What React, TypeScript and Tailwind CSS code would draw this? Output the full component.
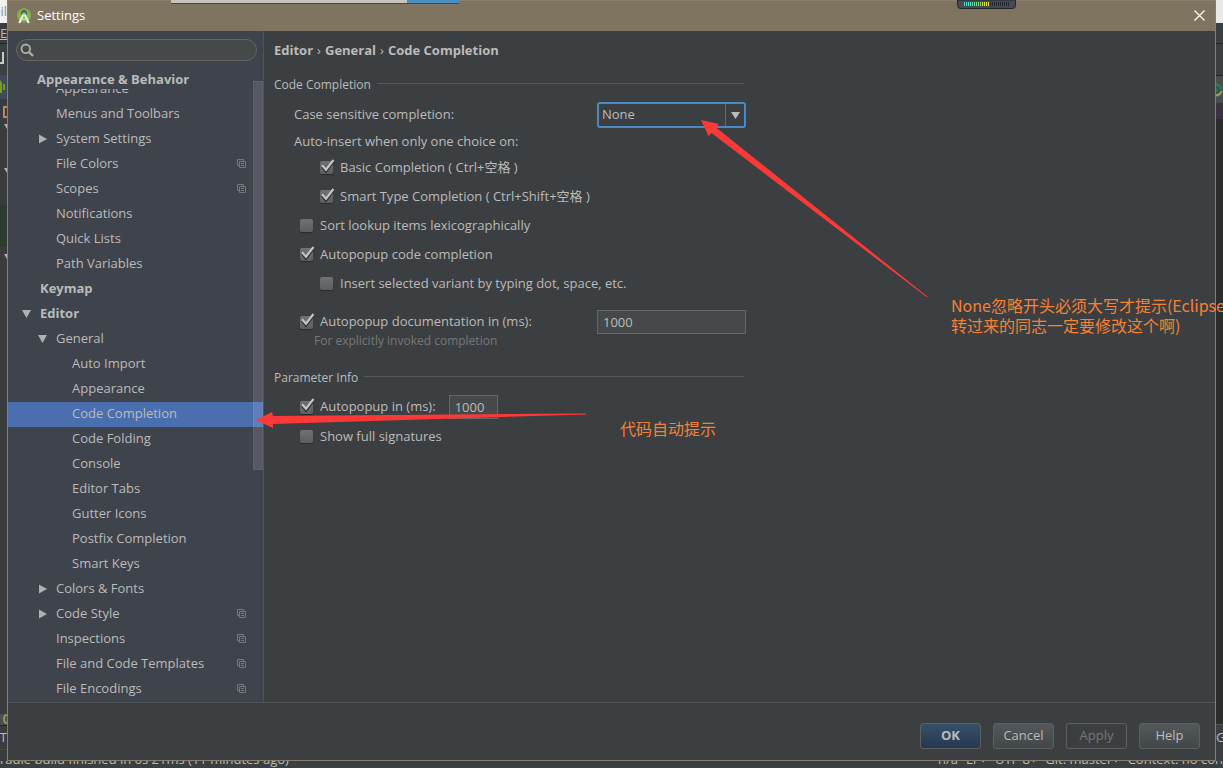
import { useState } from 'react';

type TreeItem = {
  label: string;
  level: 0 | 1 | 2;
  arrow?: 'open' | 'closed';
  project?: boolean;
};

const TREE: TreeItem[] = [
  { label: 'Appearance', level: 1 },
  { label: 'Menus and Toolbars', level: 1 },
  { label: 'System Settings', level: 1, arrow: 'closed' },
  { label: 'File Colors', level: 1, project: true },
  { label: 'Scopes', level: 1, project: true },
  { label: 'Notifications', level: 1 },
  { label: 'Quick Lists', level: 1 },
  { label: 'Path Variables', level: 1 },
  { label: 'Keymap', level: 0 },
  { label: 'Editor', level: 0, arrow: 'open' },
  { label: 'General', level: 1, arrow: 'open' },
  { label: 'Auto Import', level: 2 },
  { label: 'Appearance', level: 2 },
  { label: 'Code Completion', level: 2 },
  { label: 'Code Folding', level: 2 },
  { label: 'Console', level: 2 },
  { label: 'Editor Tabs', level: 2 },
  { label: 'Gutter Icons', level: 2 },
  { label: 'Postfix Completion', level: 2 },
  { label: 'Smart Keys', level: 2 },
  { label: 'Colors & Fonts', level: 1, arrow: 'closed' },
  { label: 'Code Style', level: 1, arrow: 'closed', project: true },
  { label: 'Inspections', level: 1, project: true },
  { label: 'File and Code Templates', level: 1, project: true },
  { label: 'File Encodings', level: 1, project: true },
];

const LEVEL_PAD = ['pl-3', 'pl-7', 'pl-11'];

function StudioLogo() {
  return (
    <svg className="h-4 w-4" viewBox="0 0 16 16" aria-hidden="true">
      <circle cx="8" cy="7.2" r="7" fill="#7bb54a" />
      <path d="M5 5a3 3 0 0 1 6 0v1.5H5z" fill="#4d6b55" />
      <path d="M7.2 7 3.2 15M8.8 7l4 8" fill="none" stroke="#f0f3ee" strokeWidth="2" />
      <path d="M4 10q4 2.600 8 0" fill="none" stroke="#d3dccb" strokeWidth="1.2" />
      <circle cx="8" cy="6.2" r="1.5" fill="#f0f3ee" />
      <circle cx="8" cy="6.2" r="0.7" fill="#4d6b55" />
    </svg>
  );
}

function TreeArrow({ state }: { state?: 'open' | 'closed' }) {
  return (
    <svg className="mr-1 h-3 w-4 shrink-0" viewBox="0 0 16 12" aria-hidden="true">
      {state === 'open' && <path d="M2 2h9l-4.5 8z" fill="#b0b0b0" />}
      {state === 'closed' && <path d="M3 1.5v9l8-4.5z" fill="#b0b0b0" />}
    </svg>
  );
}

function ProjectIcon() {
  return (
    <svg className="h-[10px] w-[10px] shrink-0" viewBox="0 0 10 10" fill="none" stroke="#75787d" aria-hidden="true">
      <path d="M2.5 6.5h-2v-6h6v2" />
      <path d="M2.5 2.5h6v6h-6zM4 4.5h3M4 6.5h3" />
    </svg>
  );
}

function CheckBox({ id, label, checked = false }: { id: string; label: string; checked?: boolean }) {
  return (
    <div className="flex items-center">
      <span className="relative mr-[7px] flex h-4 w-[13px] items-center">
        <input
          id={id}
          type="checkbox"
          defaultChecked={checked}
          className="peer h-[13px] w-[13px] appearance-none rounded-[2px] bg-linear-to-b from-[#707172] to-[#5d5e5f] shadow-[0_1px_1px_#28292a]"
        />
        <svg
          className="pointer-events-none absolute -top-px left-0 hidden h-[15px] w-[15px] peer-checked:block"
          viewBox="0 0 15 15"
          fill="none"
          aria-hidden="true"
        >
          <path d="M2 7.5l4 5L13.5 2.5" stroke="#2b2c2d" strokeWidth="2.4" />
          <path d="M2 6.2l4 4.5L13.5 1" stroke="#c4c4c4" strokeWidth="2.2" />
        </svg>
      </span>
      <label htmlFor={id}>{label}</label>
    </div>
  );
}

function SectionTitle({ children }: { children: string }) {
  return (
    <div className="flex h-5 items-center gap-[6px] pr-0.5 text-xs">
      <h2>{children}</h2>
      <div className="mb-[3px] h-px flex-1 bg-[#555759]" />
    </div>
  );
}

function Sidebar() {
  const [selected, setSelected] = useState(13);

  return (
    <aside className="relative flex w-64 shrink-0 flex-col overflow-hidden border-r border-[#515456] bg-[#3f434c]">
      <div className="relative mx-2 mt-2 mr-[6px]">
        <input
          type="text"
          aria-label="Search settings"
          className="block h-[22px] w-full rounded-full border border-[#646667] bg-[#45494a] pr-3 pl-6 outline-none"
        />
        <svg className="pointer-events-none absolute top-1 left-1 h-[14px] w-[14px]" viewBox="0 0 14 14" fill="none" stroke="#adadad" aria-hidden="true">
          <circle cx="5.8" cy="5.8" r="4.3" strokeWidth="1.8" />
          <path d="M9 9l4 4" strokeWidth="2.4" />
        </svg>
      </div>
      <h2 className="mt-[9px] h-[19px] pl-[29px] leading-[19px] font-bold">Appearance &amp; Behavior</h2>
      <nav className="min-h-0 flex-1 overflow-hidden">
        <ul className="-mt-3">
          {TREE.map((item, i) => (
            <li key={i}>
              <button
                type="button"
                onClick={() => setSelected(i)}
                className={`flex h-[25px] w-full items-center pr-4 pb-0.5 text-left ${LEVEL_PAD[item.level]} ${
                  item.level === 0 ? 'font-bold' : ''
                } ${selected === i ? 'bg-[#4b6eaf]' : ''}`}
              >
                <TreeArrow state={item.arrow} />
                <span className="flex-1">{item.label}</span>
                {item.project && <ProjectIcon />}
              </button>
            </li>
          ))}
        </ul>
      </nav>
      <div className="pointer-events-none absolute top-[50px] right-0 h-[389px] w-[10px] border border-white/5 bg-white/12" />
    </aside>
  );
}

function CompletionForm() {
  return (
    <section className="min-w-0 flex-1 pt-[10px] pl-[10px]">
      <h1 className="flex h-5 items-center gap-1 font-bold">
        <span>Editor</span>
        <span className="font-normal">›</span>
        <span>General</span>
        <span className="font-normal">›</span>
        <span>Code Completion</span>
      </h1>

      <div className="mt-[14px] w-[472px] max-w-full">
        <SectionTitle>Code Completion</SectionTitle>
        <div className="mt-[7px] flex h-[26px] items-center justify-between pl-5">
          <label htmlFor="case">Case sensitive completion:</label>
          <div className="relative h-[26px] w-[149px]">
            <select
              id="case"
              defaultValue="None"
              className="h-full w-full appearance-none rounded-[3px] border-2 border-[#4a88c7] bg-[#3c3f41] pl-[3px] outline-none"
            >
              <option>None</option>
              <option>First letter</option>
              <option>All</option>
            </select>
            <span className="pointer-events-none absolute inset-y-[2px] right-[2px] flex w-[19px] items-center justify-center border-l border-[#646667]">
              <svg className="h-[7px] w-[9px]" viewBox="0 0 9 7" aria-hidden="true">
                <path d="M0 0h9L4.5 7z" fill="#bbbbbb" />
              </svg>
            </span>
          </div>
        </div>
        <p className="h-[25px] pl-5 leading-[26px]">Auto-insert when only one choice on:</p>
        <div className="grid auto-rows-[29px] items-center pl-[26px]">
          <div className="pl-5">
            <CheckBox id="basic" label="Basic Completion ( Ctrl+空格 )" checked />
          </div>
          <div className="pl-5">
            <CheckBox id="smart" label="Smart Type Completion ( Ctrl+Shift+空格 )" checked />
          </div>
          <CheckBox id="sort" label="Sort lookup items lexicographically" />
          <CheckBox id="autopopup" label="Autopopup code completion" checked />
          <div className="pl-5">
            <CheckBox id="insert" label="Insert selected variant by typing dot, space, etc." />
          </div>
        </div>
        <div className="mt-[11px] flex h-[26px] items-center justify-between pl-[26px]">
          <CheckBox id="docs" label="Autopopup documentation in (ms):" checked />
          <input
            type="text"
            aria-label="Documentation delay"
            defaultValue="1000"
            className="h-6 w-[149px] border border-[#646667] bg-[#45494a] px-[5px] outline-none"
          />
        </div>
        <p className="h-3 pl-10 text-xs leading-3 text-[#777777]">For explicitly invoked completion</p>

        <div className="mt-[21px]">
          <SectionTitle>Parameter Info</SectionTitle>
        </div>
        <div className="mt-[6px] flex h-[26px] items-center gap-[13px] pl-[26px]">
          <CheckBox id="params" label="Autopopup in (ms):" checked />
          <input
            type="text"
            aria-label="Parameter info delay"
            defaultValue="1000"
            className="h-6 w-[49px] border border-[#646667] bg-[#45494a] px-[5px] outline-none"
          />
        </div>
        <div className="mt-0.5 flex h-[29px] items-center pl-[26px]">
          <CheckBox id="signatures" label="Show full signatures" />
        </div>
      </div>
    </section>
  );
}

function DialogButtons() {
  const base = 'h-[26px] w-[61px] rounded-[3px] border';
  const plain = 'border-[#5e6060] bg-linear-to-b from-[#53585a] to-[#434749]';

  return (
    <footer className="flex h-[58px] shrink-0 justify-end gap-3 border-t border-[#515456] pt-5 pr-[15px]">
      <button type="button" className={`${base} border-[#5e6060] bg-linear-to-b from-[#375069] to-[#263850] font-bold`}>
        OK
      </button>
      <button type="button" className={`${base} ${plain}`}>Cancel</button>
      <button type="button" disabled className={`${base} border-[#5e6060] text-[#777777]`}>
        Apply
      </button>
      <button type="button" className={`${base} ${plain}`}>Help</button>
    </footer>
  );
}

// Slivers of the IDE window that stay visible around the dialog
function LeftSliver() {
  return (
    <div className="flex w-[7px] shrink-0 flex-col overflow-hidden bg-[#393b3d] whitespace-nowrap">
      <div className="flex h-[23px] justify-end bg-[#f0f0f0] leading-[23px] text-[#8b8fa8]">eil</div>
      <div className="h-[21px] border-b border-[#242526] leading-5 underline">Ed</div>
      <div className="h-[31px] bg-[#3c3f41] pt-2">
        <div className="h-3 w-1 border-r-2 border-b-2 border-[#c8c8c8]" />
      </div>
      <div className="flex h-6 items-center bg-[#414a5c]">
        <svg className="h-[14px] w-[7px]" viewBox="0 0 7 14" aria-hidden="true">
          <path d="M0 0l2 3v10H0zM3 4h2v6H3z" fill="#79a01c" />
        </svg>
      </div>
      <div className="flex h-[25px] items-center justify-end">
        <div className="h-3 w-1 border-2 border-r-0 border-[#b08a58]" />
      </div>
      <div className="flex h-[81px] flex-col items-end justify-between pb-8">
        <svg className="h-[5px] w-[3px]" viewBox="0 0 3 5" aria-hidden="true">
          <path d="M0 0h3v5z" fill="#b0b0b0" />
        </svg>
        <svg className="h-[5px] w-[3px]" viewBox="0 0 3 5" aria-hidden="true">
          <path d="M0 0h3v5z" fill="#b0b0b0" />
        </svg>
      </div>
      <div className="h-[42px] bg-[#2f3a30]" />
      <div className="flex flex-1 justify-end pt-[7px]">
        <svg className="h-[5px] w-[3px]" viewBox="0 0 3 5" aria-hidden="true">
          <path d="M0 0h3v5z" fill="#b0b0b0" />
        </svg>
      </div>
      <div className="flex h-[11px] justify-end bg-[#4b4d4f]">
        <div className="h-[10px] w-1 rounded-l-full border-2 border-r-0 border-[#7d9a56]" />
      </div>
      <div className="flex h-6 items-center justify-end border-t border-[#242526]">: T</div>
      <div className="h-3 border-t border-[#48494b]" />
    </div>
  );
}

function RightSliver() {
  return (
    <div className="flex w-[7px] shrink-0 flex-col overflow-hidden bg-[#2d2c2c]">
      <div className="h-[23px] bg-[#e9e9e9]" />
      <div className="h-[21px] border-b border-[#242526] bg-[#3c3f41]" />
      <div className="h-8 border-b border-[#242526] bg-[#3c3f41]" />
      <div className="flex h-[27px] items-center bg-[#4a4d4f]">
        <svg className="h-[14px] w-[7px]" viewBox="0 0 7 14" fill="none" strokeWidth="2" aria-hidden="true">
          <path d="M0 1.5q4 0 5 4.5" stroke="#218455" />
          <path d="M5.5 8q-1 4-5.5 4.5" stroke="#86a95a" />
          <circle cx="0" cy="7" r="1.5" fill="#218455" />
        </svg>
      </div>
      <div className="h-4 bg-[#3a333f]" />
      <div className="flex-1" />
      <div className="h-[37px] border-t border-[#515456] bg-[#3c3f41] leading-6">G</div>
    </div>
  );
}

function MeterWidget() {
  return (
    <svg className="absolute top-0 left-[957px] h-[9px] w-[59px]" viewBox="0 0 59 9" aria-hidden="true">
      <path d="M.5 0v5.5q0 3 3 3h52q3 0 3-3V0z" fill="#454a56" stroke="#24262c" />
      {Array.from({ length: 23 }, (_, i) => (
        <rect key={i} x={7 + i * 2} y="2" width="1" height="4" fill={i < 5 ? '#4fdcc4' : i < 9 ? '#7fe07c' : i < 13 ? '#e6de4a' : '#262931'} />
      ))}
    </svg>
  );
}

function Annotations() {
  return (
    <div className="pointer-events-none absolute inset-0 overflow-hidden font-['Noto_Sans_CJK_SC',sans-serif] text-base leading-5 text-[#f58137]">
      <svg className="absolute top-0 left-0 h-[768px] w-[1223px]" viewBox="0 0 1223 768" fill="#fb3a38" aria-hidden="true">
        <path d="M701 120l18 4-3 3.5L928 297h-1.5L711.5 133l-3 3z" />
        <path d="M256 420l16-8 1 4 313-2.5v1L273 424v4z" />
      </svg>
      <p className="absolute top-[295px] left-[951px] whitespace-nowrap">
        None忽略开头必须大写才提示(Eclipse
        <br />
        转过来的同志一定要修改这个啊)
      </p>
      <p className="absolute top-[418px] left-[620px] whitespace-nowrap">代码自动提示</p>
    </div>
  );
}

export default function App() {
  return (
    <div className="relative flex h-screen flex-col overflow-hidden bg-[#3c3f41] font-['Open_Sans','Noto_Sans_CJK_SC',sans-serif] text-[13px] text-[#bbbbbb]">
      <div className="flex min-h-0 flex-1">
        <LeftSliver />
        <main className="flex min-w-0 flex-1 flex-col border border-t-0 border-[#8a8069] bg-[#3c3f41]">
          <header className="flex h-[31px] shrink-0 items-center border-t border-[#8a8069] bg-[#7f7460] px-2 pb-px text-white">
            <StudioLogo />
            <span className="ml-[5px] flex-1">Settings</span>
            <button type="button" aria-label="Close" className="p-0.5">
              <svg className="h-[11px] w-[11px]" viewBox="0 0 11 11" stroke="#ffffff" strokeWidth="1.2" aria-hidden="true">
                <path d="M.5.5l10 10M10.5.5l-10 10" />
              </svg>
            </button>
          </header>
          <div className="flex min-h-0 flex-1">
            <Sidebar />
            <CompletionForm />
          </div>
          <DialogButtons />
        </main>
        <RightSliver />
      </div>
      <div className="flex h-[7px] shrink-0 items-end justify-between overflow-hidden bg-[#3c3f41] leading-[18px] whitespace-nowrap">
        <span>radle build finished in 6s 21ms (11 minutes ago)</span>
        <span className="flex gap-2">
          <span>n/a</span>
          <span>LF÷</span>
          <span>UTF-8÷</span>
          <span>Git: master÷</span>
          <span>Context: no con</span>
        </span>
      </div>

      <div className="absolute top-0 left-[171px] flex h-1 w-[288px] justify-end border-b border-[#4c4639] bg-[#c8c4bc]">
        <div className="w-[52px] bg-[#4a8fc0]" />
      </div>
      <MeterWidget />
      <Annotations />
    </div>
  );
}
